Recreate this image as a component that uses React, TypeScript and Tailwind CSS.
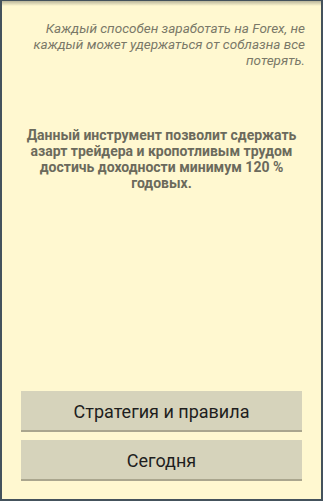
export default function App() {
  return (
    <div className="relative flex h-[501px] w-[323px] flex-col border-x-2 border-b-2 border-t border-[#44525c] bg-[#fff8d0] font-['Roboto',sans-serif]">
      <div className="pointer-events-none absolute inset-x-0 top-0 h-[5px] bg-gradient-to-b from-[#b9b59a] to-transparent" />
      <p className="mt-[19px] pl-6 pr-4 text-right text-[13.5px] italic leading-[16px] text-[#7a7868]">
        Каждый способен заработать на Forex, не каждый может удержаться от соблазна все потерять.
      </p>
      <p className="mt-[59px] px-5 text-center text-[14px] font-bold leading-[16px] text-[#6b6a5c]">
        Данный инструмент позволит сдержать азарт трейдера и кропотливым трудом достичь доходности минимум 120 % годовых.
      </p>
      <div className="mt-auto mb-[18px] flex flex-col gap-2 px-[19px]">
        <button className="h-[41px] border-b-2 border-[#aaa68e] bg-[#d6d3bb] pt-[1px] text-[18px] text-[#1e1e1e]">
          Стратегия и правила
        </button>
        <button className="h-[41px] border-b-2 border-[#aaa68e] bg-[#d6d3bb] pt-[1px] text-[18px] text-[#1e1e1e]">
          Сегодня
        </button>
      </div>
    </div>
  );
}
